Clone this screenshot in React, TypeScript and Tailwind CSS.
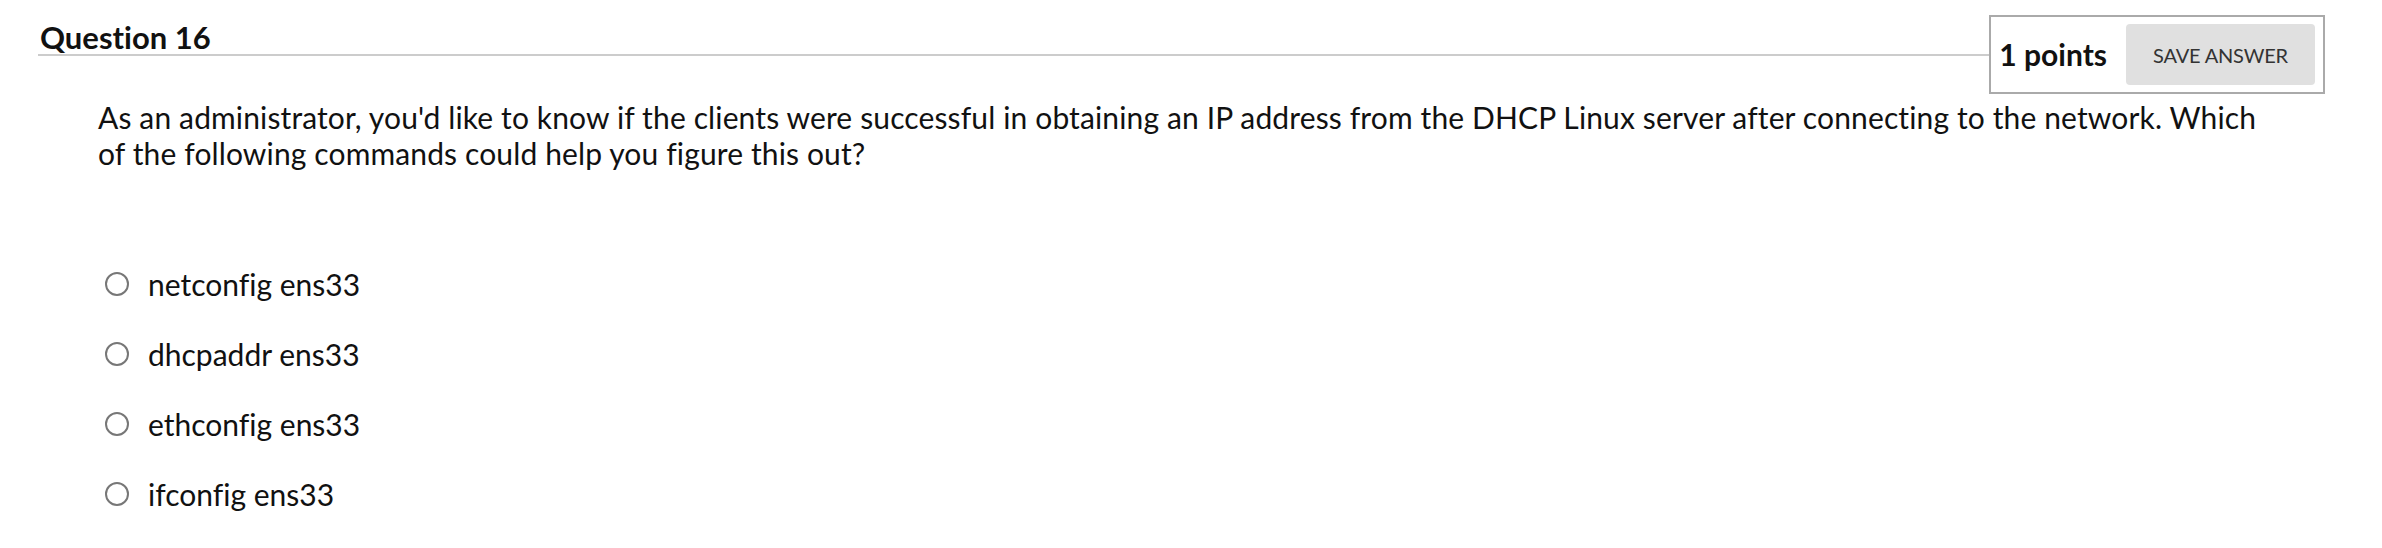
import React from "react";

const options = ["netconfig ens33", "dhcpaddr ens33", "ethconfig ens33", "ifconfig ens33"];

export default function App() {
  return (
    <div className="w-[2382px] h-[548px] overflow-hidden bg-white font-['Lato',sans-serif] text-[#111] [font-variant-ligatures:none]">
      <div className="pl-[38px] pr-[57px] pt-[15px] flex items-end">
        <div className="flex-1 border-b-2 border-[#cccccc] mb-[38px]">
          <h2 className="text-[31px] font-bold leading-[34px] pl-[2px] text-[#111]">Question 16</h2>
        </div>
        <div className="border-2 border-[#aaaaaa] h-[79px] flex items-center pl-[8px] pr-[8px] gap-[19px]">
          <span className="text-[30px] font-bold">1 points</span>
          <button className="h-[61px] w-[189px] bg-[#e0e0e0] rounded-[4px] text-[20px] tracking-[-0.2px] text-[#333] uppercase">
            Save Answer
          </button>
        </div>
      </div>
      <p className="ml-[98px] w-[2178px] mt-[5px] text-[30px] tracking-[0.13px] leading-[36px]">
        As an administrator, you'd like to know if the clients were successful in obtaining an IP address from the DHCP Linux server after connecting to the network. Which of the following commands could help you figure this out?
      </p>
      <div className="mt-[78px] ml-[105px] flex flex-col">
        {options.map((o) => (
          <label key={o} className="flex items-center h-[70px]">
            <span className="w-[24px] h-[24px] rounded-full border-2 border-[#777] bg-white" />
            <span className="ml-[19px] text-[30px]">{o}</span>
          </label>
        ))}
      </div>
    </div>
  );
}
